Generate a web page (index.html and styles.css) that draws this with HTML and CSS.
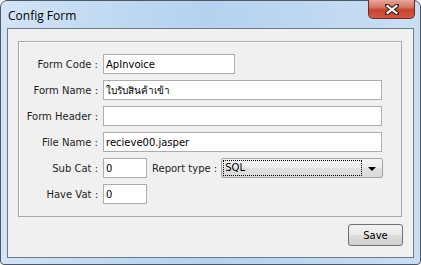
FILE: index.html
```html
<!doctype html>
<html lang="en">
<head>
    <meta charset="UTF-8">
    <meta name="viewport" content="width=device-width, initial-scale=1.0">
    <title>Config Form</title>
    <link rel="stylesheet" href="styles.css">
</head>
<body>
    <div class="window">
        <div class="titlebar">
            <span class="title">Config Form</span>
            <div class="close-btn">
                <svg width="14" height="11" viewBox="0 0 14 11">
                    <path d="M2 1.5 L12 9.5 M12 1.5 L2 9.5" stroke="#3a1a14" stroke-width="4.2" stroke-linecap="square" fill="none"/>
                    <path d="M2.5 2 L11.5 9 M11.5 2 L2.5 9" stroke="#ffffff" stroke-width="2.2" stroke-linecap="square" fill="none"/>
                </svg>
            </div>
        </div>

        <div class="client">
            <div class="group">
                <div class="row">
                    <label>Form Code :</label>
                    <input class="field field-code" value="ApInvoice">
                </div>
                <div class="row">
                    <label>Form Name :</label>
                    <input class="field field-wide" value="ใบรับสินค้าเข้า">
                </div>
                <div class="row">
                    <label>Form Header :</label>
                    <input class="field field-wide" value="">
                </div>
                <div class="row">
                    <label>File Name :</label>
                    <input class="field field-wide" value="recieve00.jasper">
                </div>
                <div class="row">
                    <label>Sub Cat :</label>
                    <input class="field field-small" value="0">
                    <span class="inline-label">Report type :</span>
                    <div class="combo">
                        <span class="combo-value">SQL</span>
                        <span class="combo-arrow"></span>
                    </div>
                </div>
                <div class="row">
                    <label>Have Vat :</label>
                    <input class="field field-small" value="0">
                </div>
            </div>

            <div class="actions">
                <button class="btn">Save</button>
            </div>
        </div>
    </div>
</body>
</html>
```

FILE: styles.css
```css
body {
    margin: 0;
    background-color: #ffffff;
    font-family: "DejaVu Sans", sans-serif;
    font-size: 10px;
}

.window {
    width: 421px;
    height: 265px;
    box-sizing: border-box;
    border: 1px solid #4d5966;
    border-radius: 7px 7px 4px 4px;
    background: linear-gradient(90deg, #d3e4f5 0%, #c4dbf2 20%, #b4d2ef 50%, #c2d9f1 80%, #c9def3 100%);
    display: flex;
    flex-direction: column;
}

.titlebar {
    height: 27px;
    display: flex;
    justify-content: space-between;
    align-items: flex-start;
    padding-left: 7px;
    padding-right: 5px;
}

.title {
    font-family: "Open Sans", "Noto Sans", sans-serif;
    font-size: 12px;
    color: #000000;
    margin-top: 6px;
}

.close-btn {
    width: 47px;
    height: 19px;
    box-sizing: border-box;
    margin-top: -1px;
    border: 1px solid #6e2a20;
    border-top: none;
    border-radius: 0 0 5px 5px;
    background: linear-gradient(180deg, #e6a79b 0%, #d77563 40%, #c7432f 55%, #d05a44 100%);
    display: flex;
    align-items: center;
    justify-content: center;
}

.close-btn svg {
    display: block;
}

.client {
    flex: 1;
    margin: 0 6px 6px;
    border: 1px solid #6d7a88;
    background-color: #f0f0f0;
    padding: 12px 10px 0 10px;
}

.group {
    width: 384px;
    height: 176px;
    box-sizing: border-box;
    border: 1px solid #a8a8a8;
    box-shadow: inset 1px 1px 0 #ffffff;
    padding-top: 12px;
    display: flex;
    flex-direction: column;
    gap: 6px;
}

.row {
    display: flex;
    align-items: center;
    height: 20px;
}

.row label {
    width: 79px;
    text-align: right;
    margin-right: 5px;
    color: #1e1e1e;
    white-space: nowrap;
}

.field {
    height: 20px;
    box-sizing: border-box;
    border: 1px solid #abadb3;
    background-color: #ffffff;
    padding: 0 2px;
    font-family: "DejaVu Sans", sans-serif;
    font-size: 10px;
    color: #000000;
    outline: none;
}

.field-code {
    width: 132px;
}

.field-wide {
    width: 279px;
}

.field-small {
    width: 44px;
}

.inline-label {
    margin-left: 5px;
    margin-right: 4px;
    color: #1e1e1e;
    white-space: nowrap;
}

.combo {
    width: 162px;
    height: 20px;
    box-sizing: border-box;
    border: 1px solid #a5a5a5;
    border-radius: 2px;
    background: linear-gradient(180deg, #f4f4f4 0%, #ececec 50%, #e0e0e0 51%, #d9d9d9 100%);
    display: flex;
    align-items: center;
    padding: 1px;
}

.combo-value {
    flex: 1;
    height: 16px;
    box-sizing: border-box;
    border: 1px dotted #000000;
    padding-left: 1px;
    line-height: 14px;
    color: #000000;
}

.combo-arrow {
    width: 19px;
    display: flex;
    justify-content: center;
}

.combo-arrow::after {
    content: "";
    border-left: 4px solid transparent;
    border-right: 4px solid transparent;
    border-top: 4px solid #000000;
    margin-top: 2px;
}

.actions {
    display: flex;
    justify-content: flex-end;
    padding-top: 7px;
}

.btn {
    width: 55px;
    height: 22px;
    box-sizing: border-box;
    border: 1px solid #707070;
    border-radius: 3px;
    background: linear-gradient(180deg, #f2f2f2 0%, #ebebeb 50%, #dddddd 51%, #cfcfcf 100%);
    font-family: "DejaVu Sans", sans-serif;
    font-size: 10px;
    color: #000000;
    padding: 0;
}
```
